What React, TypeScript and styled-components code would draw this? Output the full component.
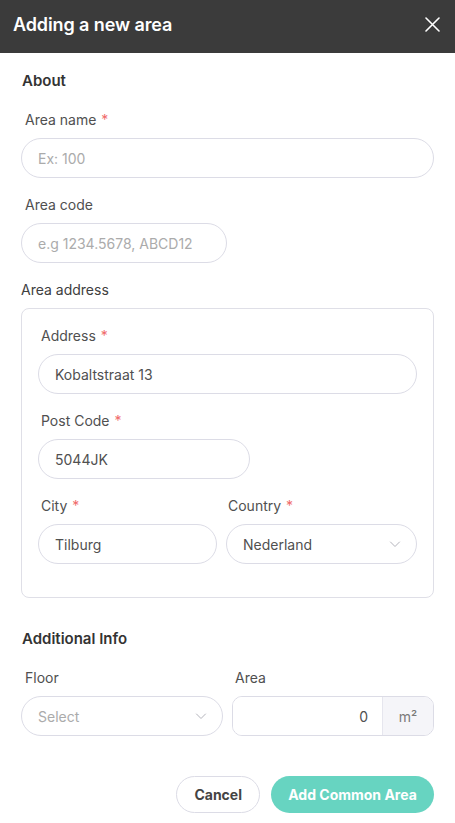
import React from "react";
import styled, { createGlobalStyle } from "styled-components";

const GlobalStyle = createGlobalStyle`
  html, body {
    margin: 0;
    padding: 0;
    background: #ffffff;
    font-family: Inter, "Noto Sans", sans-serif;
  }
  * { box-sizing: border-box; }
`;

interface FieldProps {
    label: string
    required?: boolean
    width?: string
    inset?: number
    children: React.ReactNode
}

const Field: React.FC<FieldProps> = ({ label, required, width, inset = 4, children }) => (
    <FieldWrap style={{ width }}>
        <Label $inset={inset}>
            {label}
            {required && <Star>*</Star>}
        </Label>
        {children}
    </FieldWrap>
)

const Chevron = () => (
    <svg width="12" height="12" viewBox="0 0 12 12" fill="none">
        <path d="M1.5 4 L6 8.5 L10.5 4" stroke="#b4b4bc" strokeWidth="1" strokeLinecap="round" strokeLinejoin="round" />
    </svg>
)

const App: React.FC = () => {
    return (
        <>
            <GlobalStyle />
            <Panel>
                <Header>
                    <Title>Adding a new area</Title>
                    <CloseButton aria-label="close">
                        <svg width="15" height="15" viewBox="0 0 15 15" fill="none">
                            <path d="M1 1 L14 14 M14 1 L1 14" stroke="#ffffff" strokeWidth="1.6" strokeLinecap="round" />
                        </svg>
                    </CloseButton>
                </Header>

                <Body>
                    <SectionTitle>About</SectionTitle>
                    <Field label="Area name" required>
                        <Input placeholder="Ex: 100" />
                    </Field>
                    <Field label="Area code" width="206px">
                        <Input placeholder="e.g 1234.5678, ABCD12" />
                    </Field>

                    <GroupLabel>Area address</GroupLabel>
                    <AddressBox>
                        <Field label="Address" required inset={3}>
                            <Input defaultValue="Kobaltstraat 13" />
                        </Field>
                        <Field label="Post Code" required width="212px" inset={3}>
                            <Input defaultValue="5044JK" />
                        </Field>
                        <Row $cols="179px 1fr">
                            <Field label="City" required inset={3}>
                                <Input defaultValue="Tilburg" />
                            </Field>
                            <Field label="Country" required inset={2}>
                                <SelectBox>
                                    <SelectText>Nederland</SelectText>
                                    <Chevron />
                                </SelectBox>
                            </Field>
                        </Row>
                    </AddressBox>

                    <SectionTitle $top={31}>Additional Info</SectionTitle>
                    <Row $cols="1fr 1fr">
                        <Field label="Floor">
                            <SelectBox>
                                <SelectText $placeholder>Select</SelectText>
                                <Chevron />
                            </SelectBox>
                        </Field>
                        <Field label="Area" inset={3}>
                            <UnitInput>
                                <NumberInput defaultValue="0" />
                                <Unit>m²</Unit>
                            </UnitInput>
                        </Field>
                    </Row>

                    <Actions>
                        <CancelButton>Cancel</CancelButton>
                        <SubmitButton>Add Common Area</SubmitButton>
                    </Actions>
                </Body>
            </Panel>
        </>
    )
}

const Panel = styled.div`
    width: 455px;
    min-height: 823px;
    background: #ffffff;
`;

const Header = styled.div`
    height: 53px;
    background: #3b3b3b;
    display: flex;
    align-items: center;
    justify-content: space-between;
    padding: 0 15px 4px 13px;
`;

const Title = styled.h1`
    margin: 0;
    font-size: 18px;
    font-weight: 600;
    color: #ffffff;
    letter-spacing: -0.1px;
`;

const CloseButton = styled.button`
    background: transparent;
    border: none;
    padding: 0;
    display: flex;
    cursor: pointer;
`;

const Body = styled.div`
    padding: 18px 21px 0 21px;
    display: flex;
    flex-direction: column;
`;

const SectionTitle = styled.h2<{ $top?: number }>`
    margin: ${p => p.$top ?? 0}px 0 19px 1px;
    font-size: 15px;
    line-height: 20px;
    font-weight: 600;
    color: #333333;
`;

const FieldWrap = styled.div`
    display: flex;
    flex-direction: column;
    gap: 8px;
    margin-bottom: 17px;
    min-width: 0;
`;

const Label = styled.label<{ $inset: number }>`
    font-size: 14px;
    line-height: 20px;
    color: #505050;
    padding-left: ${p => p.$inset}px;
`;

const Star = styled.span`
    color: #f06a6a;
    margin-left: 5px;
`;

const Input = styled.input`
    height: 40px;
    width: 100%;
    border: 1px solid #dcdce6;
    border-radius: 20px;
    padding: 0 16px;
    font-family: inherit;
    font-size: 14px;
    color: #505050;
    outline: none;
    background: #ffffff;

    &::placeholder {
        color: #ababab;
    }
`;

const GroupLabel = styled.div`
    font-size: 14px;
    line-height: 20px;
    color: #404040;
    margin-bottom: 8px;
`;

const AddressBox = styled.div`
    border: 1px solid #dfdfe7;
    border-radius: 8px;
    padding: 17px 16px 16px 16px;
    display: flex;
    flex-direction: column;
`;

const Row = styled.div<{ $cols: string }>`
    display: grid;
    grid-template-columns: ${p => p.$cols};
    gap: 9px;
`;

const SelectBox = styled.div`
    height: 40px;
    border: 1px solid #dcdce6;
    border-radius: 20px;
    padding: 0 15px 0 16px;
    display: flex;
    align-items: center;
    justify-content: space-between;
`;

const SelectText = styled.span<{ $placeholder?: boolean }>`
    font-size: 14px;
    color: ${p => p.$placeholder ? "#ababab" : "#505050"};
`;

const UnitInput = styled.div`
    height: 40px;
    border: 1px solid #dcdce6;
    border-radius: 10px;
    display: flex;
    overflow: hidden;
`;

const NumberInput = styled.input`
    flex: 1;
    min-width: 0;
    border: none;
    outline: none;
    text-align: right;
    padding: 0 14px;
    font-family: inherit;
    font-size: 14px;
    color: #505050;
`;

const Unit = styled.div`
    width: 51px;
    background: #f5f5f9;
    border-left: 1px solid #e6e6ee;
    display: flex;
    align-items: center;
    justify-content: center;
    font-size: 14px;
    color: #7a7a7a;
`;

const Actions = styled.div`
    display: flex;
    justify-content: flex-end;
    gap: 11px;
    margin-top: 23px;
`;

const CancelButton = styled.button`
    height: 37px;
    padding: 0 17px;
    border: 1px solid #dcdce6;
    border-radius: 19px;
    background: #ffffff;
    font-family: inherit;
    font-size: 14px;
    font-weight: 700;
    color: #444444;
    cursor: pointer;
`;

const SubmitButton = styled.button`
    height: 37px;
    width: 163px;
    border: none;
    border-radius: 19px;
    background: #67d4c1;
    font-family: inherit;
    font-size: 14px;
    font-weight: 700;
    color: #ffffff;
    cursor: pointer;
`;

export default App;
